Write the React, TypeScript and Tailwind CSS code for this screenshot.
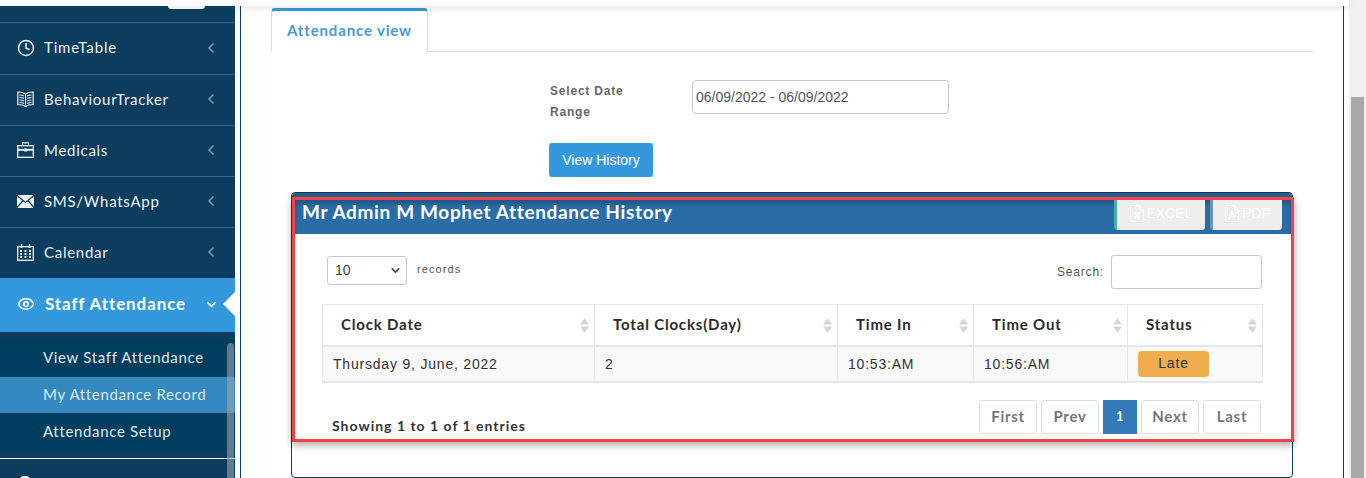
import { ChevronDown, ChevronLeft, Clock, Eye } from "lucide-react";
import { ReactNode } from "react";

const BookIcon = () => (
  <svg width="17" height="16" viewBox="0 0 17 16" fill="none" stroke="currentColor">
    <path d="M8.5 3C6.5 1.5 3.5 1 .8 1v12.5c2.7 0 5.7.5 7.7 2 2-1.5 5-2 7.7-2V1c-2.7 0-5.7.5-7.7 2z" strokeWidth="1.2" />
    <path d="M8.5 3v12.5" strokeWidth="1" />
    <path d="M2.500 4c1.500 0 3 .3 4.500 1M2.500 6.500c1.500 0 3 .3 4.500 1M2.500 9c1.500 0 3 .3 4.500 1M2.500 11.500c1.500 0 3 .3 4.500 1M14.500 4c-1.500 0-3 .3-4.500 1M14.500 6.500c-1.500 0-3 .3-4.500 1M14.500 9c-1.500 0-3 .3-4.500 1M14.500 11.500c-1.500 0-3 .3-4.500 1" strokeWidth="1.1" />
  </svg>
);

const KitIcon = () => (
  <svg width="17" height="16" viewBox="0 0 17 16" fill="none" stroke="currentColor" strokeWidth="1.3">
    <rect x="0.7" y="3.7" width="15.6" height="11.6" />
    <path d="M5.500 3.500V.8h6v2.700" />
    <path d="M.7 7.800h15.600" strokeWidth="2" />
    <rect x="7" y="6.500" width="3" height="3" fill="currentColor" stroke="none" />
  </svg>
);

const MailIcon = () => (
  <svg width="17" height="13" viewBox="0 0 17 13">
    <rect width="17" height="13" fill="currentColor" />
    <path d="M0 .5L8.500 7.500 17 .5M0 12.500L6 5.500M17 12.500L11 5.500" fill="none" stroke="#0c3c5e" strokeWidth="1.2" />
  </svg>
);

const CalendarIcon = () => (
  <svg width="17" height="17" viewBox="0 0 17 17" fill="none" stroke="currentColor">
    <rect x="0.7" y="2.700" width="15.600" height="13.600" strokeWidth="1.3" />
    <path d="M4.500 0v4M12.500 0v4" strokeWidth="1.6" />
    <path d="M3 7h2M7.500 7h2M12 7h2M3 10h2M7.500 10h2M12 10h2M3 13h2M7.500 13h2M12 13h2" strokeWidth="1.8" />
  </svg>
);

const ExcelFileIcon = () => (
  <svg width="14" height="17" viewBox="0 0 14 17" fill="none" stroke="currentColor">
    <path d="M.5.5h9l4 4v12H.5zM9.500.5v4h4" />
    <path d="M4.500 7.500l5 6M9.500 7.500l-5 6" strokeWidth="1.5" />
  </svg>
);

const PdfFileIcon = () => (
  <svg width="14" height="17" viewBox="0 0 14 17" fill="none" stroke="currentColor">
    <path d="M.5.5h9l4 4v12H.5zM9.500.5v4h4" />
    <path d="M3 14c2-1 4-5 3.500-8 1 3 2 4.500 4.500 5-2.500 0-5 1-8 3z" strokeWidth=".9" />
  </svg>
);

type MenuItem = { label: string; icon: ReactNode; height: string; tracking: string };

const menu: MenuItem[] = [
  { label: "TimeTable", icon: <Clock size={18} strokeWidth={2} />, height: "h-[52px] border-b", tracking: "tracking-[0.85px]" },
  { label: "BehaviourTracker", icon: <BookIcon />, height: "h-[51px] border-b", tracking: "tracking-[0.72px]" },
  { label: "Medicals", icon: <KitIcon />, height: "h-[51px] border-b", tracking: "tracking-[0.72px]" },
  { label: "SMS/WhatsApp", icon: <MailIcon />, height: "h-[51px] border-b", tracking: "tracking-[0.72px]" },
  { label: "Calendar", icon: <CalendarIcon />, height: "h-[50px]", tracking: "tracking-[0.72px]" },
];

const columns = ["Clock Date", "Total Clocks(Day)", "Time In", "Time Out", "Status"];
const colWidths = ["w-[272px]", "w-[243px]", "w-[136px]", "w-[154px]", "w-[135px]"];

const pages = ["First", "Prev", "1", "Next", "Last"];

const raleway = "font-['Lato','Liberation_Sans',sans-serif]";
const arial = "font-['Liberation_Sans',sans-serif]";

const SortArrows = () => (
  <svg width="9" height="15" viewBox="0 0 9 15" className="absolute right-[5px] top-[13px] text-[#d3d6da]">
    <path d="M4.500 0L9 6.500H0z M0 8.500H9L4.500 15z" fill="currentColor" />
  </svg>
);

const Sidebar = () => (
  <aside className={`w-[235px] shrink-0 h-[472px] bg-[#0c3c5e] text-[#eef3f6] relative z-20 overflow-hidden ${raleway}`}>
    <div className="h-[17px] border-b border-[#3e6884] relative">
      <div className="absolute left-[168px] top-0 h-[3px] w-[37px] rounded-b-lg bg-[#f1f1f1]" />
    </div>
    {menu.map((item) => (
      <div key={item.label} className={`${item.height} flex items-center pl-[17px] pr-[16px] pb-[2px] border-[#3e6884]`}>
        <span className="w-[27px] flex">{item.icon}</span>
        <span className={`text-[15px] flex-1 ${item.tracking}`}>{item.label}</span>
        <ChevronLeft size={16} strokeWidth={2.5} className="text-[#7b99ad]" />
      </div>
    ))}
    <div className="h-[54px] bg-[#3498dc] flex items-center pl-[17px] pr-[16px] pb-[2px] text-white relative">
      <span className="w-[28px] flex">
        <Eye size={18} strokeWidth={2} />
      </span>
      <span className="text-[17px] font-bold tracking-[0.9px] flex-1">Staff Attendance</span>
      <ChevronDown size={15} strokeWidth={2.5} />
      <div className="absolute right-0 top-[14px] border-y-[12px] border-y-transparent border-r-[12px] border-r-white" />
    </div>
    <div className="h-[127px] border-b border-white py-[8px] text-[15px] tracking-[0.66px] text-[#dfe9ef]">
      <div className="bg-[#003e5f]">
        <div className="h-[37px] flex items-center pl-[43px] pb-[2px]">View Staff Attendance</div>
        <div className="h-[36px] flex items-center pl-[43px] pb-[2px] bg-[#3388c0]">My Attendance Record</div>
        <div className="h-[37px] flex items-center pl-[43px]">Attendance Setup</div>
      </div>
    </div>
    <div className="pl-[20px] pt-[17px]">
      <div className="w-[10px] h-[4px] rounded-t-full bg-[#eef3f6]" />
    </div>
    <div className="absolute right-[1px] top-[337px] bottom-0 w-[7px] rounded-t bg-[#9aa7b0]/60" />
  </aside>
);

const AttendancePanel = () => (
  <div className="ml-[20px] w-[1002px] h-[286px] border border-[#0c3c5e] rounded-[4px] mt-[15px]">
    <div className="h-[4px] bg-[#26608f] rounded-t-[3px]" />
    <div className="h-[245px] border-[3px] border-[#f04349] shadow-[0_3px_8px_rgba(0,0,0,0.35)] -mr-[2px] ml-0">
      <div className="h-[34px] bg-[#2a6ca6] flex justify-between pl-[7px] pr-[9px] shadow-[inset_0_4px_4px_rgba(0,0,0,0.2)]">
        <h2 className={`text-[19px] font-bold text-white tracking-[0.65px] leading-[24px] ${raleway}`}>
          Mr Admin M Mophet Attendance History
        </h2>
        <div className={`flex gap-[5px] h-[30px] text-white text-[14px] ${arial}`}>
          <div className="w-[91px] bg-[#eeeeee] rounded-b-[3px] border-l-[3px] border-[#45b39d] flex items-center justify-center gap-[3px] pb-[3px]">
            <ExcelFileIcon />
            EXCEL
          </div>
          <div className="w-[72px] bg-[#eeeeee] rounded-b-[3px] border-l-[3px] border-[#6f93b8] flex items-center justify-center gap-[3px] pb-[3px]">
            <PdfFileIcon />
            PDF
          </div>
        </div>
      </div>
      <div className="flex justify-between items-start pl-[32px] pr-[29px] pt-[21px]">
        <div className="flex items-start gap-[10px] mt-[1px]">
          <div className={`w-[80px] h-[29px] border border-[#c9c9c9] rounded-[3px] flex items-center justify-between pl-[7px] pr-[4px] text-[14px] text-[#444] ${arial}`}>
            10
            <ChevronDown size={13} strokeWidth={3} />
          </div>
          <span className={`text-[11px] tracking-[1.1px] text-[#555] mt-[5px] ${arial}`}>records</span>
        </div>
        <div className="flex items-center gap-[7px]">
          <span className={`text-[12px] tracking-[0.8px] text-[#555] ${arial}`}>Search:</span>
          <div className="w-[151px] h-[34px] border border-[#c9c9c9] rounded-[3px] bg-white" />
        </div>
      </div>
      <div className="pl-[27px] pt-[15px]">
        <table className="w-[940px] table-fixed border-collapse border border-[#e4e7ea] border-b-2">
          <thead>
            <tr className="h-[41px]">
              {columns.map((label, i) => (
                <th
                  key={label}
                  className={`${colWidths[i]} pl-[18px] pb-[2px] relative text-left border border-[#e4e7ea] border-b-2 text-[15px] font-bold tracking-[0.82px] text-[#2b2b2b] ${raleway}`}
                >
                  {label}
                  <SortArrows />
                </th>
              ))}
            </tr>
          </thead>
          <tbody>
            <tr className={`h-[36px] bg-[#f9f9f9] text-[14px] tracking-[0.8px] text-[#333] ${arial}`}>
              <td className="pl-[10px] pt-[2px] border border-[#e4e7ea]">Thursday 9, June, 2022</td>
              <td className="pl-[10px] pt-[2px] border border-[#e4e7ea]">2</td>
              <td className="pl-[10px] pt-[2px] border border-[#e4e7ea]">10:53:AM</td>
              <td className="pl-[10px] pt-[2px] border border-[#e4e7ea]">10:56:AM</td>
              <td className="pl-[10px] border border-[#e4e7ea]">
                <span className="flex items-center justify-center w-[71px] h-[26px] bg-[#f0ad4e] rounded-[4px]">Late</span>
              </td>
            </tr>
          </tbody>
        </table>
      </div>
      <div className="flex justify-between pl-[37px] pr-[30px] pt-[17px]">
        <span className={`text-[14px] font-bold tracking-[1px] text-[#333] mt-[15px] ${raleway}`}>Showing 1 to 1 of 1 entries</span>
        <div className={`flex gap-[4px] text-[15px] font-bold tracking-[0.7px] text-[#777] ${raleway}`}>
          {pages.map((page) => (
            <div
              key={page}
              className={
                page === "1"
                  ? "h-[34px] w-[34px] flex items-center justify-center bg-[#337ab7] text-white text-[13px]"
                  : "h-[34px] w-[58px] flex items-center justify-center border border-[#ddd] rounded-[3px]"
              }
            >
              {page}
            </div>
          ))}
        </div>
      </div>
    </div>
  </div>
);

export default function App() {
  return (
    <div className="w-[1366px] h-[478px] overflow-hidden bg-white flex">
      <div className="w-[1349px] shrink-0">
        <div className="h-[6px] relative z-10 bg-white shadow-[0_2px_6px_rgba(0,0,0,0.12)]" />
        <div className="flex">
          <Sidebar />
          <main className="ml-[5px] w-[1104px] h-[472px] border-x border-[#0c3c5e] pl-[30px] pt-[2px] overflow-hidden">
            <div className="w-[1042px] border-b border-[#ddd] h-[44px] flex">
              <div className={`w-[157px] h-[44px] bg-white border-x border-[#ddd] border-t-[3px] border-t-[#3498dc] rounded-t-[4px] flex items-center justify-center pb-[2px] text-[15px] font-bold tracking-[0.85px] text-[#4a98d8] ${raleway}`}>
                Attendance view
              </div>
            </div>
            <div className="flex items-start pl-[278px] pt-[28px]">
              <div className={`w-[143px] text-[12px] font-bold leading-[21px] tracking-[0.8px] text-[#666] pl-[1px] pt-[1px] ${arial}`}>
                Select Date
                <br />
                Range
              </div>
              <div className={`w-[257px] h-[34px] border border-[#c9c9c9] rounded-[4px] flex items-center px-[3px] text-[14px] text-[#555] ${arial}`}>
                06/09/2022 - 06/09/2022
              </div>
            </div>
            <div className="pl-[278px] pt-[20px]">
              <div className={`w-[104px] h-[34px] rounded-[3px] bg-[#3498dc] text-white text-[14px] flex items-center justify-center ${arial}`}>
                View History
              </div>
            </div>
            <AttendancePanel />
          </main>
        </div>
      </div>
      <div className="w-[17px] h-[478px] bg-[#f1f1f1] pt-[97px] px-[2px]">
        <div className="h-full bg-[#a8a8a8]" />
      </div>
    </div>
  );
}
